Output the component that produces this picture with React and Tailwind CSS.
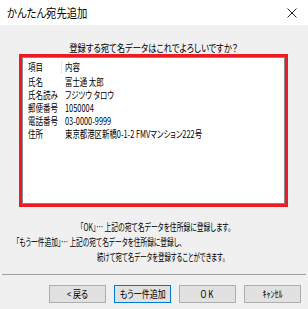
import React from 'react';

const rows = [
  ['氏名', '富士通 太郎'],
  ['氏名読み', 'フジツウ タロウ'],
  ['郵便番号', '1050004'],
  ['電話番号', '03-0000-9999'],
  ['住所', '東京都港区新橋0-1-2 FMVマンション222号'],
];

const Btn = ({ children, focused }) => (
  <button
    className={`w-[57px] h-[18px] shrink-0 flex items-center justify-center text-[10px] leading-none bg-[#e1e1e1] border ${
      focused ? 'border-[#0078d7]' : 'border-[#adadad]'
    }`}
  >
    <span className="inline-block whitespace-nowrap scale-x-[0.8]">{children}</span>
  </button>
);

const App = () => {
  return (
    <div className="w-[308px] h-[309px] flex flex-col bg-[#f0f0f0] text-black font-['Noto_Sans_CJK_JP',sans-serif] [font-feature-settings:'palt'] overflow-hidden">
      {/* title bar */}
      <div className="h-[25px] shrink-0 bg-white flex items-center justify-between pl-[7px] pr-[11px]">
        <span className="inline-block origin-left scale-x-[0.86] text-[12px] leading-none whitespace-nowrap">かんたん宛先追加</span>
        <svg width="10" height="10" viewBox="0 0 10 10" className="text-[#222]">
          <path d="M0.5 0.5L9.5 9.5M9.5 0.5L0.5 9.5" stroke="currentColor" strokeWidth="1" />
        </svg>
      </div>

      {/* body */}
      <div className="flex-1 flex flex-col">
        <div className="shrink-0 pt-[17px] h-[29px] text-center text-[10px] leading-[12px] whitespace-nowrap">
          <span className="inline-block scale-x-[0.83]">登録する宛て名データはこれでよろしいですか？</span>
        </div>

        <div className="shrink-0 ml-[19px] w-[269px] h-[153px] border-[3px] border-[#ec1c24] bg-white">
          <div className="h-full border border-[#828790] pl-[5px] pt-[2px] text-[10px] leading-[13px]">
            <div className="flex h-[15px] items-start">
              <span className="w-[37px] shrink-0 overflow-visible">
                <span className="inline-block origin-left scale-x-[0.75]">項目</span>
              </span>
              <span className="border-l border-dotted border-[#d0d0d0] -ml-[4px] pl-[3px] h-[13px]">
                <span className="inline-block origin-left scale-x-[0.75]">内容</span>
              </span>
            </div>
            {rows.map(([k, v]) => (
              <div key={k} className="flex h-[13px]">
                <span className="w-[37px] shrink-0 whitespace-nowrap">
                  <span className="inline-block origin-left scale-x-[0.75]">{k}</span>
                </span>
                <span className="whitespace-nowrap">
                  <span className="inline-block origin-left scale-x-[0.74]">{v}</span>
                </span>
              </div>
            ))}
          </div>
        </div>

        <div className="shrink-0 mt-[12px] text-[10px] leading-[15px] whitespace-nowrap">
          <div className="pl-[80px]">
            <span className="inline-block origin-left scale-x-[0.68]">「OK」… 上記の宛て名データを住所録に登録します。</span>
          </div>
          <div className="pl-[16px]">
            <span className="inline-block origin-left scale-x-[0.67]">「もう一件追加」… 上記の宛て名データを住所録に登録し、</span>
          </div>
          <div className="pl-[97px]">
            <span className="inline-block origin-left scale-x-[0.64]">続けて宛て名データを登録することができます。</span>
          </div>
        </div>

        <div className="shrink-0 mt-[10px] h-px bg-[#a0a0a0] mx-[2px]" />

        <div className="shrink-0 mt-[10px] flex gap-[8px] pl-[49px]">
          <Btn>&lt; 戻る</Btn>
          <Btn focused>もう一件追加</Btn>
          <Btn>O K</Btn>
          <Btn>ｷｬﾝｾﾙ</Btn>
        </div>
      </div>
    </div>
  );
};

export default App;
